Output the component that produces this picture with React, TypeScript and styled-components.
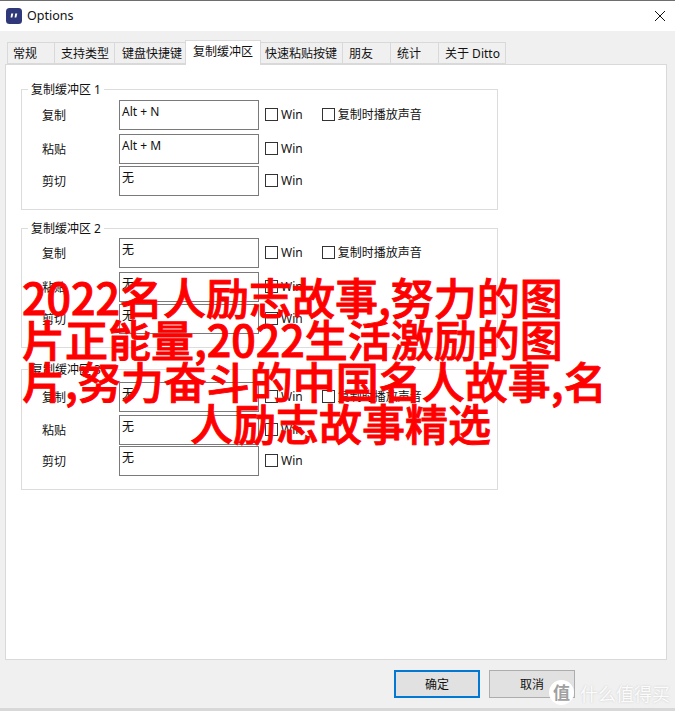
import styled, { createGlobalStyle } from 'styled-components';

const GlobalStyle = createGlobalStyle`
  html, body {
    margin: 0;
    padding: 0;
    background: #fff;
  }
  * {
    box-sizing: border-box;
  }
`;

const uiFont = `'Noto Sans', 'Noto Sans CJK SC', sans-serif`;

interface ShortcutRow {
  label: string;
  value: string;
  gap: number;
  sound?: boolean;
}

interface BufferGroup {
  title: string;
  top: number;
  pad: number;
  height: number;
  rows: ShortcutRow[];
}

const tabs = [
  { title: '常规', width: 48, pad: 5 },
  { title: '支持类型', width: 61, pad: 6 },
  { title: '键盘快捷键', width: 72, pad: 7 },
  { title: '复制缓冲区', width: 76, pad: 7, active: true },
  { title: '快速粘贴按键', width: 83, pad: 4 },
  { title: '朋友', width: 49, pad: 6 },
  { title: '统计', width: 49, pad: 6 },
  { title: '关于 Ditto', width: 68, pad: 6 },
];

const groups: BufferGroup[] = [
  {
    title: '复制缓冲区 1',
    top: 24,
    pad: 10,
    height: 121,
    rows: [
      { label: '复制', value: 'Alt + N', gap: 0, sound: true },
      { label: '粘贴', value: 'Alt + M', gap: 4 },
      { label: '剪切', value: '无', gap: 2 },
    ],
  },
  {
    title: '复制缓冲区 2',
    top: 18,
    pad: 9,
    height: 120,
    rows: [
      { label: '复制', value: '无', gap: 0, sound: true },
      { label: '粘贴', value: '无', gap: 4 },
      { label: '剪切', value: '无', gap: 2 },
    ],
  },
  {
    title: '复制缓冲区 3',
    top: 21,
    pad: 12,
    height: 121,
    rows: [
      { label: '复制', value: '无', gap: 0, sound: true },
      { label: '粘贴', value: '无', gap: 3 },
      { label: '剪切', value: '无', gap: 1 },
    ],
  },
];

const headlineLines = [
  { text: '2022名人励志故事,努力的图', indent: 0 },
  { text: '片正能量,2022生活激励的图', indent: 0 },
  { text: '片,努力奋斗的中国名人故事,名', indent: 0 },
  { text: '人励志故事精选', indent: 168 },
];

const App = () => {
  return (
    <Window>
      <GlobalStyle />
      <TitleBar>
        <TitleGroup>
          <svg width="16" height="16" viewBox="0 0 16 16">
            <rect width="16" height="16" rx="3.5" fill="#2f3878" />
            <path d="M5.2 5.6h2.1L6.3 9.6H4.6zM9.2 5.6h2.1l-1 4H8.6z" fill="#fff" />
          </svg>
          <WindowTitle>Options</WindowTitle>
        </TitleGroup>
        <svg width="12" height="12" viewBox="0 0 12 12">
          <path d="M1 1l10 10M11 1L1 11" stroke="#111" strokeWidth="1" fill="none" />
        </svg>
      </TitleBar>

      <Body>
        <TabRow>
          {tabs.map((tab) => (
            <Tab key={tab.title} $width={tab.width} $pad={tab.pad} $active={!!tab.active}>
              {tab.title}
            </Tab>
          ))}
        </TabRow>

        <Panel>
          {groups.map((group) => (
            <Group key={group.title} $top={group.top} $pad={group.pad} $height={group.height}>
              <Legend>{group.title}</Legend>
              {group.rows.map((row) => (
                <Row key={row.label} $gap={row.gap}>
                  <RowLabel>{row.label}</RowLabel>
                  <KeyField>{row.value}</KeyField>
                  <CheckItem>
                    <CheckBox />
                    Win
                  </CheckItem>
                  {row.sound && (
                    <CheckItem>
                      <CheckBox />
                      复制时播放声音
                    </CheckItem>
                  )}
                </Row>
              ))}
            </Group>
          ))}
        </Panel>

        <Footer>
          <DialogButton $primary>确定</DialogButton>
          <DialogButton>取消</DialogButton>
        </Footer>
      </Body>

      <Headline>
        {headlineLines.map((line) => (
          <HeadlineLine key={line.text} $indent={line.indent}>
            {line.text}
          </HeadlineLine>
        ))}
      </Headline>

      <Watermark>
        <WatermarkBadge>值</WatermarkBadge>
        <WatermarkText>什么值得买</WatermarkText>
      </Watermark>
    </Window>
  );
};

export default App;

const Window = styled.div`
  position: relative;
  display: flex;
  flex-direction: column;
  width: 675px;
  height: 711px;
  overflow: hidden;
  border-top: 1px solid #6e6e6e;
  font-family: ${uiFont};
  font-size: 12px;
  color: #111;
`;

const TitleBar = styled.div`
  display: flex;
  align-items: center;
  justify-content: space-between;
  height: 30px;
  padding: 0 9px 0 6px;
  background: #fff;
`;

const TitleGroup = styled.div`
  display: flex;
  align-items: center;
  gap: 5px;
`;

const WindowTitle = styled.span`
  font-size: 12.5px;
  line-height: 16px;
`;

const Body = styled.div`
  flex: 1;
  display: flex;
  flex-direction: column;
  background: #f0f0f0;
  padding: 9px 8px 0 5px;
  border-bottom: 3px solid;
  border-image: linear-gradient(#6e6e6e 33%, #b9b9b9 33%, #d8d8d8) 1;
`;

const TabRow = styled.div`
  display: flex;
  align-items: flex-end;
  height: 25px;
  margin-bottom: -1px;
  padding-left: 3px;
  position: relative;
  z-index: 1;
`;

const Tab = styled.div<{ $width: number; $pad: number; $active: boolean }>`
  position: relative;
  z-index: ${(p) => (p.$active ? 1 : 0)};
  flex: none;
  width: ${(p) => p.$width}px;
  height: ${(p) => (p.$active ? 25 : 22)}px;
  margin-left: -1px;
  margin-bottom: ${(p) => (p.$active ? 0 : 1)}px;
  padding: 2px 0 0 ${(p) => p.$pad}px;
  line-height: 17px;
  white-space: nowrap;
  background: ${(p) => (p.$active ? '#fff' : '#f0f0f0')};
  border: 1px solid #d9d9d9;
  border-bottom: ${(p) => (p.$active ? 'none' : '1px solid #d9d9d9')};
`;

const Panel = styled.div`
  height: 596px;
  padding: 0 168px 0 15px;
  background: #fff;
  border: 1px solid #d9d9d9;
`;

const Group = styled.div<{ $top: number; $pad: number; $height: number }>`
  position: relative;
  height: ${(p) => p.$height}px;
  margin-top: ${(p) => p.$top}px;
  padding: ${(p) => p.$pad}px 0 0 20px;
  border: 1px solid #dcdcdc;
`;

const Legend = styled.span`
  position: absolute;
  top: -9px;
  left: 6px;
  padding: 0 3px;
  line-height: 18px;
  background: #fff;
`;

const Row = styled.div<{ $gap: number }>`
  display: flex;
  align-items: center;
  height: 30px;
  margin-top: ${(p) => p.$gap}px;
`;

const RowLabel = styled.span`
  width: 77px;
`;

const KeyField = styled.div`
  width: 140px;
  height: 30px;
  padding: 2px 2px;
  line-height: 17px;
  background: #fff;
  border: 1px solid #7a7a7a;
`;

const CheckItem = styled.label`
  display: flex;
  align-items: center;
  gap: 3px;
  margin: 0 13px 2px 6px;
  white-space: nowrap;
  &:last-child {
    margin-right: 0;
  }
`;

const CheckBox = styled.span`
  width: 13px;
  height: 13px;
  background: #fff;
  border: 1px solid #333;
`;

const Footer = styled.div`
  display: flex;
  justify-content: flex-end;
  gap: 9px;
  padding: 10px 92px 0 0;
`;

const DialogButton = styled.button<{ $primary?: boolean }>`
  width: 86px;
  height: 28px;
  padding: 0;
  font-family: ${uiFont};
  font-size: 12px;
  color: #111;
  background: #e1e1e1;
  border: ${(p) => (p.$primary ? '2px solid #0078d4' : '1px solid #adadad')};
`;

const Headline = styled.div`
  position: absolute;
  top: 274px;
  left: 22px;
  font-family: 'Noto Sans CJK SC', 'Noto Sans', sans-serif;
  font-size: 43px;
  font-weight: 500;
  line-height: 42px;
  color: #ff0000;
  -webkit-text-stroke: 0.9px #ff0000;
`;

const HeadlineLine = styled.div<{ $indent: number }>`
  margin-left: ${(p) => p.$indent}px;
  white-space: nowrap;
`;

const Watermark = styled.div`
  position: absolute;
  right: 5px;
  bottom: 6px;
  display: flex;
  align-items: center;
  gap: 6px;
`;

const WatermarkBadge = styled.div`
  width: 25px;
  height: 25px;
  line-height: 25px;
  text-align: center;
  border-radius: 50%;
  font-size: 17px;
  font-weight: 700;
  color: #a0a0a0;
  background: #fff;
`;

const WatermarkText = styled.div`
  font-family: 'Noto Sans CJK SC', sans-serif;
  font-size: 18px;
  line-height: 24px;
  color: #fbfbfb;
  text-shadow: 0 0 2px #c8c8c8;
`;
